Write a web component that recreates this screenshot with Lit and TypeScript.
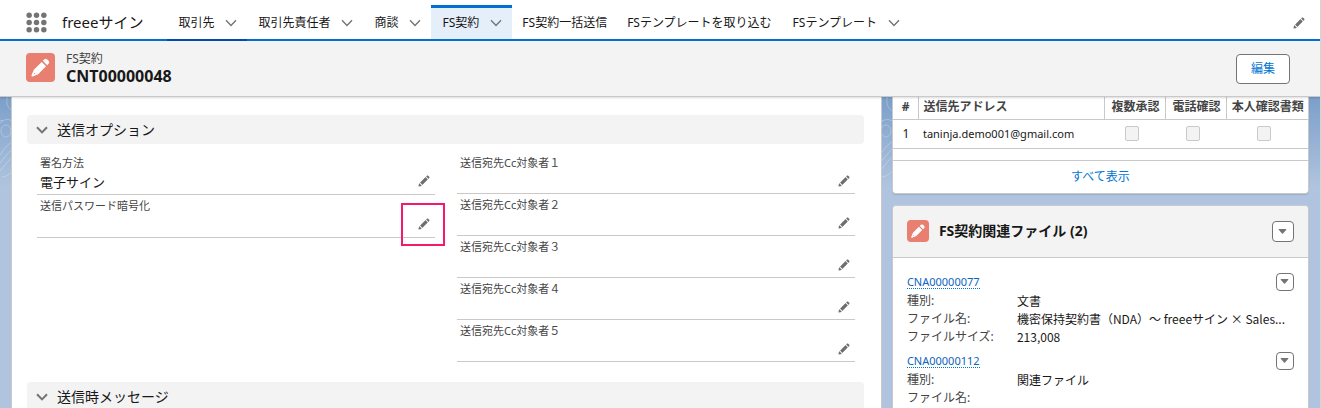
import { LitElement, html, css, svg } from "lit";
import { customElement } from "lit/decorators.js";
import { classMap } from "lit/directives/class-map.js";

interface Tab {
  label: string;
  menu: boolean;
  state?: "active" | "current";
}

interface Field {
  label: string;
  value?: string;
  marked?: boolean;
}

interface FileRow {
  id: string;
  details: [string, string][];
}

const tabs: Tab[] = [
  { label: "取引先", menu: true, state: "current" },
  { label: "取引先責任者", menu: true },
  { label: "商談", menu: true },
  { label: "FS契約", menu: true, state: "active" },
  { label: "FS契約一括送信", menu: false },
  { label: "FSテンプレートを取り込む", menu: false },
  { label: "FSテンプレート", menu: true },
];

const leftFields: Field[] = [
  { label: "署名方法", value: "電子サイン" },
  { label: "送信パスワード暗号化", marked: true },
];

const rightFields: Field[] = ["１", "２", "３", "４", "５"].map((n) => ({
  label: `送信宛先Cc対象者${n}`,
}));

const files: FileRow[] = [
  {
    id: "CNA00000077",
    details: [
      ["種別:", "文書"],
      ["ファイル名:", "機密保持契約書（NDA）～ freeeサイン × Sales..."],
      ["ファイルサイズ:", "213,008"],
    ],
  },
  {
    id: "CNA00000112",
    details: [
      ["種別:", "関連ファイル"],
      ["ファイル名:", ""],
    ],
  },
];

const pencilPaths = svg`
  <path d="M9.5 33.4l8.9 8.9c.4.4 1 .4 1.4 0L42 20c.4-.4.4-1 0-1.4l-8.8-8.8c-.4-.4-1-.4-1.4 0L9.5 32.1c-.4.4-.4 1 0 1.3z"/>
  <path d="M36.1 5.7c-.4.4-.4 1 0 1.4l8.8 8.8c.4.4 1 .4 1.4 0l2.5-2.5c1.6-1.5 1.6-3.9 0-5.5l-4.7-4.7c-1.6-1.6-4.1-1.6-5.7 0l-2.3 2.5z"/>
  <path d="M2.1 48.2c-.2 1 .7 1.9 1.7 1.7l10.9-2.6c.4-.1.7-.3.9-.5l.2-.2c.2-.2.3-.9-.1-1.3l-9-9c-.4-.4-1.1-.3-1.3-.1l-.2.2c-.3.3-.4.6-.5.9L2.1 48.2z"/>`;

const pencil = html`<svg class="pencil" viewBox="0 0 52 52" aria-hidden="true">${pencilPaths}</svg>`;

const chevron = html`<svg class="chevron" viewBox="0 0 12 8" aria-hidden="true">
  <path d="M1 1.2L6 6.4L11 1.2" />
</svg>`;

const objectIcon = html`<svg class="object" viewBox="0 0 100 100" aria-hidden="true">
  <path fill-rule="evenodd" d="M27 58L54 31L69 46L42 73L23 81Q18 82 19 77ZM29 68L26 74L32 71Z" />
  <path d="M58 27L63 22Q68 18 73 22L78 27Q82 32 78 37L73 42Z" />
</svg>`;

const triangle = html`<svg class="triangle" viewBox="0 0 10 6" aria-hidden="true">
  <path d="M1 0H9Q10 0 9.5 1L5.6 5.5Q5 6 4.4 5.5L.5 1Q0 0 1 0Z" />
</svg>`;

const launcher = html`<svg class="launcher-icon" viewBox="0 0 20 20" aria-hidden="true">
  ${[3, 10, 17].map((y) => [3, 10, 17].map((x) => svg`<circle cx=${x} cy=${y} r="2.6" />`))}
</svg>`;

const contours = html`<svg class="contours" aria-hidden="true">
  <defs>
    <pattern id="topo" width="110" height="90" patternUnits="userSpaceOnUse">
      <g fill="none" stroke="#fff" stroke-opacity=".25">
        <path d="M8 -2Q4 8 12 14M3 24Q-2 22 -4 26M12 24Q6 20 0 26M1 34a5 6 0 1 0 10 0a5 6 0 1 0 -10 0M0 58Q8 46 14 44M0 66Q8 56 14 50M0 74Q8 64 14 58M2 80Q8 80 14 72" />
      </g>
    </pattern>
  </defs>
  <rect width="100%" height="90" fill="url(#topo)" />
</svg>`;

@customElement("app-root")
export class AppRoot extends LitElement {
  static styles = css`
    :host {
      box-sizing: border-box;
      display: flex;
      flex-direction: column;
      height: 100vh;
      overflow: hidden;
      border-right: 1px solid #d4d4d4;
      font: 12px/18px "Noto Sans", "Noto Sans CJK JP", sans-serif;
      color: #181818;
      background: #b0c4df;
    }
    * { box-sizing: border-box; }
    button, a { font: inherit; }
    button { margin: 0; padding: 0; border: 0; background: none; cursor: pointer; color: inherit; }
    a { color: inherit; text-decoration: none; }
    svg { display: block; flex: none; }
    h1, h2, p, dl, dd { margin: 0; }

    .pencil { width: 12px; height: 12px; fill: #706e6b; }
    .chevron { width: 12px; height: 8px; fill: none; stroke: #747474; stroke-width: 1.4; }
    .triangle { width: 9px; height: 5px; fill: #747474; }
    .object { width: 29px; height: 29px; border-radius: 4px; background: #e97f70; fill: #fff; }
    .files-head .object { width: 22px; height: 22px; }

    .nav {
      flex: none;
      display: flex;
      height: 41px;
      padding: 0 15px 0 26px;
      background: #fff;
      border-bottom: 2px solid #0070d2;
      align-items: stretch;
    }
    .launcher { display: flex; align-items: center; padding-top: 5px; }
    .launcher-icon { width: 21px; height: 21px; fill: #747474; }
    .app-name { padding: 5px 24px 0 15px; font-size: 15px; line-height: 34px; }
    .tabs { display: flex; flex: 1; }
    .tab {
      display: flex;
      align-items: center;
      height: 39px;
      padding: 6px 10px 0 11px;
      gap: 11px;
      white-space: nowrap;
    }
    .tab-plain { padding: 6px 10px 0; }
    .tab-current { height: 42px; border-bottom: 3px solid #014ab0; }
    .tab-active {
      height: 34px;
      margin-top: 5px;
      padding-top: 0;
      padding-bottom: 2px;
      border-top: 3px solid #0070d2;
      background: #e5effa;
    }
    .nav-edit { display: flex; align-items: center; padding-top: 7px; }

    .record {
      flex: none;
      display: flex;
      align-items: center;
      gap: 11px;
      height: 56px;
      padding: 0 30px 0 26px;
      background: #f3f3f3;
      border-bottom: 1px solid #c9c9c9;
      box-shadow: 0 1px 2px rgba(0, 0, 0, .15);
      z-index: 1;
    }
    .record .object { margin-bottom: 3px; }
    .record-title { flex: 1; padding-bottom: 2px; }
    .record-title p { line-height: 16px; color: #444; }
    .record-title h1 { font-size: 16px; line-height: 18px; font-weight: 700; }
    .edit {
      width: 54px;
      height: 30px;
      border: 1px solid #747474;
      border-radius: 4px;
      background: #fff;
      color: #0176d3;
    }

    .body {
      position: relative;
      flex: 1;
      min-height: 0;
      display: grid;
      grid-template-columns: 25fr 12fr;
      gap: 11px;
      padding: 0 11px 0 12px;
      background: linear-gradient(#7b9fc9, #b0c4df 90px);
    }
    .contours { position: absolute; left: 0; top: 0; width: 100%; height: 90px; }

    .detail {
      position: relative;
      padding: 18px 17px 0 15px;
      background: #fff;
      outline: 1px solid #c9c9c9;
    }
    .section { margin-bottom: 20px; }
    .section-title {
      display: flex;
      align-items: center;
      gap: 9px;
      width: 100%;
      height: 29px;
      padding: 0 9px;
      border-radius: 4px;
      background: #f3f3f3;
      font-size: 14px;
      text-align: left;
    }
    .section-title .chevron { stroke-width: 2; }
    .section h2 { font-weight: 400; font-size: 14px; }
    .fields {
      display: grid;
      grid-template-columns: 1fr 1fr;
      gap: 22px;
      padding: 8px 9px 0 10px;
      align-items: start;
    }
    .field { padding: 3px 5px 0 3px; border-bottom: 1px solid #c9c9c9; }
    .field dt { font-size: 11px; line-height: 16px; color: #444; }
    .field dd {
      display: flex;
      justify-content: space-between;
      height: 22px;
      font-size: 13px;
      line-height: 23px;
    }
    .roomy .field dd { height: 23px; }
    .field-edit { position: relative; display: flex; align-items: center; height: 20px; margin-left: auto; }
    .mark {
      position: absolute;
      top: -11px;
      left: -17px;
      width: 44px;
      height: 43px;
      border: 2px solid #f5196b;
      pointer-events: none;
    }

    .side { position: relative; display: flex; flex-direction: column; gap: 11px; min-width: 0; }
    .card { background: #fff; border: 1px solid #c9c9c9; border-radius: 4px; box-shadow: 0 1px 1px rgba(0, 0, 0, .12); }
    .card-top { border-top: 0; border-radius: 0 0 4px 4px; }
    table { width: 100%; border-collapse: collapse; table-layout: fixed; }
    .c-num { width: 26px; }
    .c-check { width: 61px; }
    .c-last { width: 81px; }
    th, td { padding: 0; white-space: nowrap; border-bottom: 1px solid #c9c9c9; }
    th { height: 22px; padding-bottom: 1px; line-height: 18px; color: #444; text-align: center; }
    th + th { border-left: 1px solid #c9c9c9; }
    th.address { padding-left: 4px; text-align: left; }
    td { height: 29px; text-align: center; }
    td.address { padding-left: 4px; text-align: left; font-size: 11px; }
    td.check { padding-right: 6px; }
    td input {
      appearance: none;
      display: block;
      width: 14px;
      height: 15px;
      margin: 0 auto;
      border: 1px solid #c9c9c9;
      border-radius: 2px;
      background: #f3f3f3;
    }
    .all {
      display: block;
      margin-top: 11px;
      border-top: 1px solid #c9c9c9;
      line-height: 32px;
      text-align: center;
      color: #0176d3;
    }
    .files { flex: 1; border-radius: 4px 4px 0 0; }
    .files-head {
      display: flex;
      align-items: center;
      gap: 10px;
      height: 52px;
      padding: 0 14px;
      background: #f3f3f3;
      border-bottom: 1px solid #c9c9c9;
      border-radius: 4px 4px 0 0;
    }
    .files-head h2 { flex: 1; font-size: 14px; line-height: 20px; font-weight: 700; }
    .menu {
      flex: none;
      display: flex;
      align-items: center;
      justify-content: center;
      width: 22px;
      height: 21px;
      border: 1px solid #747474;
      border-radius: 4px;
      background: #fff;
    }
    .menu-small { width: 18px; height: 18px; }
    .file-list { display: grid; gap: 6px; padding: 15px 14px 0; }
    .file-head { display: flex; justify-content: space-between; height: 19px; }
    .file-head a {
      height: 16px;
      font-size: 11px;
      line-height: 17px;
      color: #0b65bd;
      border-bottom: 1px dotted #0176d3;
    }
    .file dl { display: grid; grid-template-columns: 110px 1fr; line-height: 18px; white-space: nowrap; }
    .file dt { color: #444; }
    .file:first-child { min-height: 73px; }
    .file dd { font-family: "Noto Sans CJK JP", sans-serif; }
  `;

  private renderTab(tab: Tab) {
    const classes = {
      tab: true,
      "tab-plain": !tab.menu,
      "tab-current": tab.state === "current",
      "tab-active": tab.state === "active",
    };
    return html`<a href="#" class=${classMap(classes)}>${tab.label}${tab.menu ? chevron : ""}</a>`;
  }

  private renderField(field: Field) {
    return html`<div class="field">
      <dt>${field.label}</dt>
      <dd>
        ${field.value ?? ""}
        <button class="field-edit" aria-label="${field.label}を編集">
          ${pencil}${field.marked ? html`<span class="mark"></span>` : ""}
        </button>
      </dd>
    </div>`;
  }

  private renderSectionTitle(title: string) {
    return html`<h2><button class="section-title">${chevron}${title}</button></h2>`;
  }

  private renderFile(file: FileRow) {
    return html`<article class="file">
      <div class="file-head">
        <a href="#">${file.id}</a>
        <button class="menu menu-small" aria-label="アクション">${triangle}</button>
      </div>
      <dl>${file.details.map(([k, v]) => html`<dt>${k}</dt><dd>${v}</dd>`)}</dl>
    </article>`;
  }

  render() {
    return html`
      <nav class="nav">
        <button class="launcher" aria-label="アプリケーションランチャー">${launcher}</button>
        <span class="app-name">freeeサイン</span>
        <div class="tabs">${tabs.map((t) => this.renderTab(t))}</div>
        <button class="nav-edit" aria-label="ナビゲーションを編集">${pencil}</button>
      </nav>
      <header class="record">
        ${objectIcon}
        <div class="record-title">
          <p>FS契約</p>
          <h1>CNT00000048</h1>
        </div>
        <button class="edit">編集</button>
      </header>
      <main class="body">
        ${contours}
        <div class="detail">
          <section class="section">
            ${this.renderSectionTitle("送信オプション")}
            <div class="fields">
              <dl class="roomy">${leftFields.map((f) => this.renderField(f))}</dl>
              <dl>${rightFields.map((f) => this.renderField(f))}</dl>
            </div>
          </section>
          <section class="section">${this.renderSectionTitle("送信時メッセージ")}</section>
        </div>
        <aside class="side">
          <section class="card card-top">
            <table>
              <colgroup>
                <col class="c-num" /><col /><col class="c-check" /><col class="c-check" /><col class="c-last" />
              </colgroup>
              <thead>
                <tr>
                  <th>#</th><th class="address">送信先アドレス</th><th>複数承認</th><th>電話確認</th><th>本人確認書類</th>
                </tr>
              </thead>
              <tbody>
                <tr>
                  <td>1</td>
                  <td class="address">taninja.demo001@gmail.com</td>
                  ${["複数承認", "電話確認", "本人確認書類"].map(
                    (name) => html`<td class="check"><input type="checkbox" disabled aria-label=${name} /></td>`
                  )}
                </tr>
              </tbody>
            </table>
            <a class="all" href="#">すべて表示</a>
          </section>
          <section class="card files">
            <div class="files-head">
              ${objectIcon}
              <h2>FS契約関連ファイル (2)</h2>
              <button class="menu" aria-label="アクション">${triangle}</button>
            </div>
            <div class="file-list">${files.map((f) => this.renderFile(f))}</div>
          </section>
        </aside>
      </main>
    `;
  }
}
